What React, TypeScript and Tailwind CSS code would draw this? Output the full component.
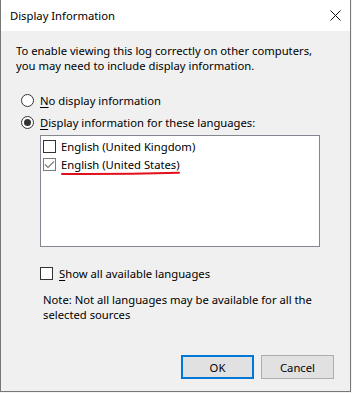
import React from "react";

const font = { fontFamily: '"Noto Sans", "Segoe UI", sans-serif' };

function Radio({ checked }: { checked?: boolean }) {
  return (
    <div className="w-[13px] h-[13px] rounded-full border border-[#333333] bg-white flex items-center justify-center shrink-0">
      {checked && <div className="w-[7px] h-[7px] rounded-full bg-[#333333]" />}
    </div>
  );
}

function Check({ checked, gray }: { checked?: boolean; gray?: boolean }) {
  return (
    <div
      className={`w-[13px] h-[13px] border bg-white shrink-0 flex items-center justify-center ${
        gray ? "border-[#7a7a7a]" : "border-[#333333]"
      }`}
    >
      {checked && (
        <svg width="11" height="11" viewBox="0 0 11 11">
          <path d="M1 5.5 L4 8.5 L10 2.5" fill="none" stroke="#7a7a7a" strokeWidth="1.2" />
        </svg>
      )}
    </div>
  );
}

export default function App() {
  return (
    <div className="w-[352px] h-[393px] bg-[#f4f4f4] text-black text-[11.25px] leading-[15px]" style={font}>
      <div className="w-[351px] h-[392px] flex flex-col border-l border-r border-b border-[#777777] bg-[#f0f0f0]">
        <div className="h-[31px] bg-white flex items-center justify-between pl-[9px] pr-[9px] shrink-0">
          <span className="text-[11.25px] text-black">Display Information</span>
          <svg width="11" height="11" viewBox="0 0 11 11">
            <path d="M0.5 0.5 L10.5 10.5 M10.5 0.5 L0.5 10.5" stroke="#111" strokeWidth="1" />
          </svg>
        </div>
        <div className="flex-1 flex flex-col">
          <p className="mt-[12px] pl-[15px]">
            To enable viewing this log correctly on other computers,
            <br />
            you may need to include display information.
          </p>
          <div className="mt-[19px] ml-[20px] h-[16px] flex items-center gap-[6px]">
            <Radio />
            <span>
              <span className="underline underline-offset-2">N</span>o display information
            </span>
          </div>
          <div className="mt-[6px] ml-[20px] h-[16px] flex items-center gap-[6px]">
            <Radio checked />
            <span>
              <span className="underline underline-offset-2">D</span>isplay information for these languages:
            </span>
          </div>
          <div className="mt-[5px] ml-[39px] w-[280px] h-[112px] bg-white border border-[#828790] flex flex-col pt-[1px] pl-[2px]">
            <div className="h-[18px] flex items-center gap-[5px]">
              <Check />
              <span>English (United Kingdom)</span>
            </div>
            <div className="h-[18px] flex items-center gap-[5px]">
              <Check checked gray />
              <span className="relative">
                English (United States)
                <svg
                  width="122"
                  height="5"
                  viewBox="0 0 122 5"
                  className="absolute left-0 top-[14px]"
                >
                  <path d="M1 3 Q 60 3.4 118 1.8" fill="none" stroke="#e0101c" strokeWidth="2" strokeLinecap="round" />
                </svg>
              </span>
            </div>
          </div>
          <div className="mt-[18px] ml-[39px] h-[16px] flex items-center gap-[6px]">
            <Check />
            <span>
              <span className="underline underline-offset-2">S</span>how all available languages
            </span>
          </div>
          <p className="mt-[11px] ml-[42px]">
            Note: Not all languages may be available for all the
            <br />
            selected sources
          </p>
          <div className="mt-[33px] flex justify-end gap-[7px] pr-[16px]">
            <button className="w-[73px] h-[24px] bg-[#e1e1e1] border-2 border-[#0078d7] text-[11.25px] text-black">
              OK
            </button>
            <button className="w-[73px] h-[24px] bg-[#e1e1e1] border border-[#adadad] text-[11.25px] text-black">
              Cancel
            </button>
          </div>
        </div>
      </div>
    </div>
  );
}
